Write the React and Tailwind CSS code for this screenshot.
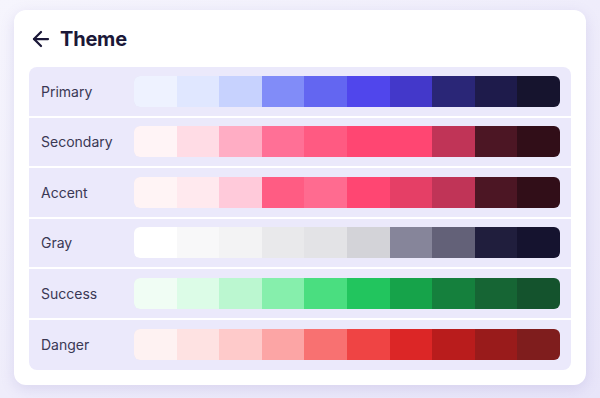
import React from "react";
import { ArrowLeft } from "lucide-react";

const palettes = [
  {
    name: "Primary",
    colors: ["#eef2ff", "#e0e7ff", "#c7d2fe", "#818cf8", "#6366f1", "#5046ec", "#4338ca", "#2a2677", "#1e1b4b", "#16142e"],
  },
  {
    name: "Secondary",
    colors: ["#fff4f6", "#ffdce5", "#ffadc4", "#ff7096", "#ff5a82", "#ff4672", "#ff4672", "#c03457", "#4c1624", "#310e18"],
  },
  {
    name: "Accent",
    colors: ["#fff4f5", "#ffe9ee", "#ffcada", "#ff5c83", "#ff6b90", "#ff4672", "#e53f66", "#c03457", "#4c1624", "#310e18"],
  },
  {
    name: "Gray",
    colors: ["#ffffff", "#f8f8f9", "#f3f3f4", "#e9e9eb", "#e3e3e6", "#d3d3d8", "#86859a", "#636178", "#201e3d", "#15132f"],
  },
  {
    name: "Success",
    colors: ["#f0fdf4", "#dcfce7", "#bbf7d0", "#86efac", "#4ade80", "#22c55e", "#16a34a", "#15803d", "#166534", "#14532d"],
  },
  {
    name: "Danger",
    colors: ["#fef2f2", "#fee2e2", "#fecaca", "#fca5a5", "#f87171", "#ef4444", "#dc2626", "#b91c1c", "#991b1b", "#7f1d1d"],
  },
];

export default function App() {
  return (
    <div className="w-[600px] h-[398px] bg-gradient-to-br from-[#f6f5fd] to-[#e8e5f9] pt-[10px] pl-[14px] font-['Inter',sans-serif]">
      {/* Card */}
      <div className="w-[572px] h-[375px] bg-white rounded-xl shadow-[0_4px_14px_rgba(120,110,190,0.18)] p-[15px] flex flex-col gap-[15px]">
        {/* Header */}
        <div className="h-[27px] flex items-center gap-[7px] text-[#1b1838]">
          <ArrowLeft size={24} strokeWidth={2.25} />
          <h1 className="text-[20px] font-bold leading-none tracking-[-0.2px]">Theme</h1>
        </div>

        {/* Palette table */}
        <div className="bg-[#ebe9fb] rounded-lg flex flex-col divide-y-2 divide-white">
          {palettes.map((p) => (
            <div key={p.name} className="h-[50.5px] flex items-center pl-[12px] pr-[11px]">
              <span className="w-[93px] text-[14px] text-[#3a3854]">{p.name}</span>
              <div className="flex-1 h-[31px] flex rounded-md overflow-hidden ring-1 ring-inset ring-black/5">
                {p.colors.map((c, i) => (
                  <div key={i} className="flex-1 h-full" style={{ backgroundColor: c }} />
                ))}
              </div>
            </div>
          ))}
        </div>
      </div>
    </div>
  );
}
